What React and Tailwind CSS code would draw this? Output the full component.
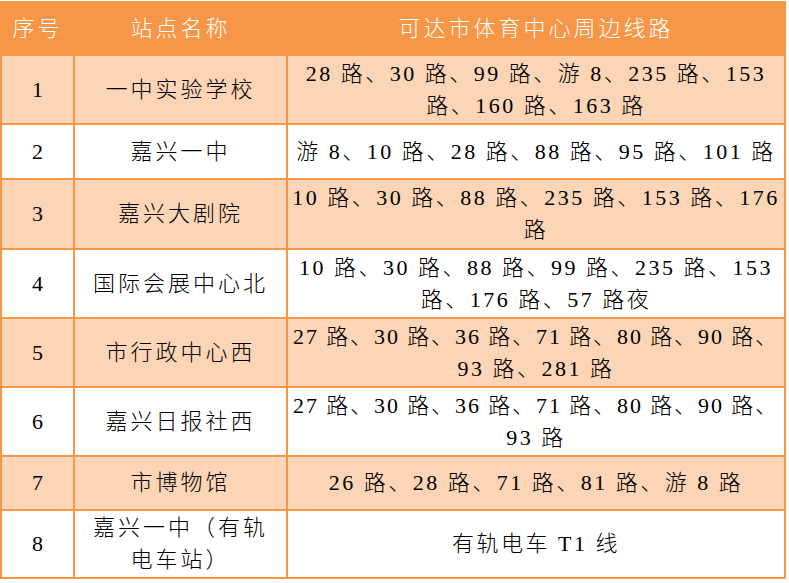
const rows = [
  { no: "1", name: ["一中实验学校"], routes: ["28 路、30 路、99 路、游 8、235 路、153", "路、160 路、163 路"], h: "h-[69px]", alt: true },
  { no: "2", name: ["嘉兴一中"], routes: ["游 8、10 路、28 路、88 路、95 路、101 路"], h: "h-[55px]", alt: false },
  { no: "3", name: ["嘉兴大剧院"], routes: ["10 路、30 路、88 路、235 路、153 路、176", "路"], h: "h-[70px]", alt: true },
  { no: "4", name: ["国际会展中心北"], routes: ["10 路、30 路、88 路、99 路、235 路、153", "路、176 路、57 路夜"], h: "h-[69px]", alt: false },
  { no: "5", name: ["市行政中心西"], routes: ["27 路、30 路、36 路、71 路、80 路、90 路、", "93 路、281 路"], h: "h-[69px]", alt: true },
  { no: "6", name: ["嘉兴日报社西"], routes: ["27 路、30 路、36 路、71 路、80 路、90 路、", "93 路"], h: "h-[69px]", alt: false },
  { no: "7", name: ["市博物馆"], routes: ["26 路、28 路、71 路、81 路、游 8 路"], h: "h-[54px]", alt: true },
  { no: "8", name: ["嘉兴一中（有轨", "电车站）"], routes: ["有轨电车 T1 线"], h: "h-[68px]", alt: false },
];

const cell = "border-2 border-[#F79646] text-center align-middle";

export default function App() {
  return (
    <div className="w-[789px] h-[583px] bg-white pt-px">
      <table className="w-[786px] border-collapse table-fixed font-['Liberation_Serif','Noto_Sans_CJK_SC',serif] font-light text-[22px] leading-[32px] text-black">
        <colgroup>
          <col className="w-[73px]" />
          <col className="w-[213px]" />
          <col />
        </colgroup>
        <thead>
          <tr className="h-[53px] bg-[#F79646] text-white">
            <th className={`${cell} font-light tracking-[3px]`}>序号</th>
            <th className={`${cell} font-light tracking-[3px]`}>站点名称</th>
            <th className={`${cell} font-light tracking-[3px]`}>可达市体育中心周边线路</th>
          </tr>
        </thead>
        <tbody>
          {rows.map((r) => (
            <tr key={r.no} className={`${r.h} ${r.alt ? "bg-[#FBD5B5]" : "bg-white"}`}>
              <td className={cell}>{r.no}</td>
              <td className={`${cell} tracking-[3px]`}>
                {r.name.map((l) => (
                  <div key={l} className="whitespace-nowrap">{l}</div>
                ))}
              </td>
              <td className={cell}>
                {r.routes.map((l) => (
                  <div
                    key={l}
                    className={`-mx-4 whitespace-nowrap ${l.endsWith("、") ? "tracking-[1.9px]" : "tracking-[2.5px]"}`}
                  >
                    {l}
                  </div>
                ))}
              </td>
            </tr>
          ))}
        </tbody>
      </table>
    </div>
  );
}
